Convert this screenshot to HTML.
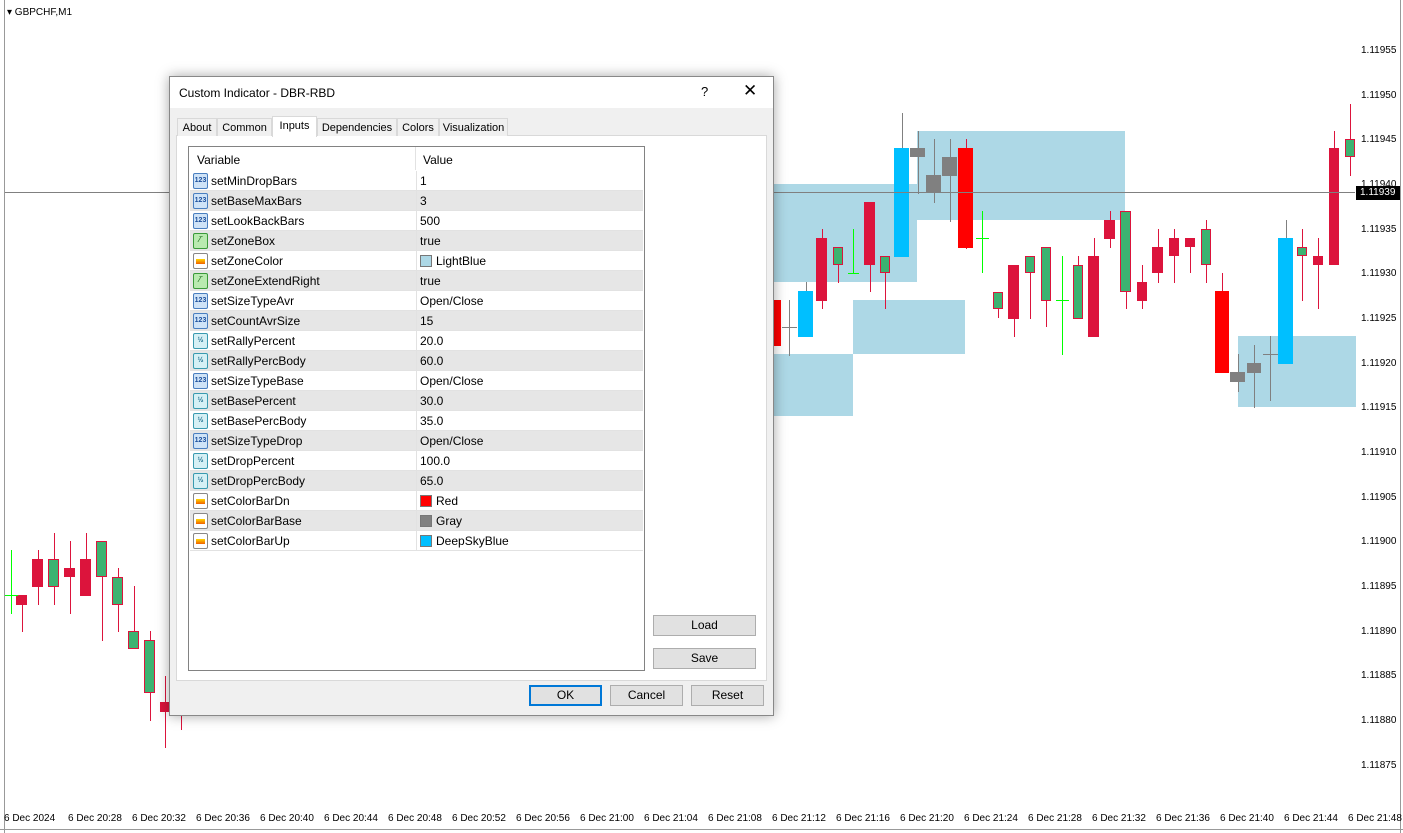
<!DOCTYPE html>
<html><head><meta charset="utf-8"><style>
*{box-sizing:border-box;margin:0;padding:0}
body{width:1403px;height:833px;overflow:hidden;background:#fff;font-family:Tahoma,"Liberation Sans",sans-serif;font-size:11px;color:#000;position:relative}
.a{position:absolute}
.pl{position:absolute;left:1361px;font-size:10px}
.tl{position:absolute;top:813px;font-size:10px;white-space:nowrap}
#dlg{position:absolute;left:169px;top:76px;width:605px;height:640px;background:#f0f0f0;border:1px solid #888;box-shadow:0 0 12px rgba(0,0,0,.35)}
.tab{position:absolute;top:41px;height:18px;border:1px solid #d9d9d9;border-bottom:none;background:#f0f0f0;font-size:11px;padding:3px 0 0 0;text-align:center;white-space:nowrap}
.row{position:absolute;left:1px;width:453px;height:20px;border-bottom:1px solid #e2e2e2;font-size:12px}
.row span.n{position:absolute;left:21px;top:3px}
.row span.v{position:absolute;left:230px;top:3px}
.row .sep{position:absolute;left:226px;top:0;width:1px;height:20px;background:#e2e2e2}
.alt{background:#e6e6e6}
.ic{position:absolute;left:3px;top:2px;width:15px;height:16px;border:1px solid #4a7fc0;border-radius:2px;background:#cfe3f7;font-size:7px;font-weight:bold;color:#1c4f9c;text-align:center;line-height:14px}
.ic.g{border-color:#3a9a3a;background:#b9eab0;color:#1a6a1a}
.ic.o{border-color:#888;background:#fff}
.ic.h{border-color:#3a9ab0;background:#d5f0f5;color:#1a6a8a}
.sw{display:inline-block;width:12px;height:12px;border:1px solid #777;vertical-align:-2px;margin-right:4px}
.btn{position:absolute;height:21px;border:1px solid #adadad;background:#e1e1e1;font-size:12px;text-align:center;line-height:19px}
</style></head><body>
<div class="a" style="left:4px;top:0;width:1px;height:833px;background:#999"></div>
<div class="a" style="left:0;top:829px;width:1403px;height:1px;background:#999"></div>
<div class="a" style="left:1400px;top:0;width:1px;height:833px;background:#999"></div>
<div class="a" style="left:7px;top:7px;font-size:10px">▾ GBPCHF,M1</div>
<div id="chart"></div>
<div class="a" style="left:5px;top:192px;width:1350px;height:1px;background:#808080"></div>
<div class="pl" style="top:45px">1.11955</div><div class="pl" style="top:90px">1.11950</div><div class="pl" style="top:134px">1.11945</div><div class="pl" style="top:179px">1.11940</div>
<div class="a" style="left:1356px;top:186px;width:44px;height:14px;background:#000;color:#fff;font-size:10px;padding:1px 0 0 4px">1.11939</div>
<div class="pl" style="top:224px">1.11935</div><div class="pl" style="top:268px">1.11930</div><div class="pl" style="top:313px">1.11925</div><div class="pl" style="top:358px">1.11920</div><div class="pl" style="top:402px">1.11915</div><div class="pl" style="top:447px">1.11910</div><div class="pl" style="top:492px">1.11905</div><div class="pl" style="top:536px">1.11900</div><div class="pl" style="top:581px">1.11895</div><div class="pl" style="top:626px">1.11890</div><div class="pl" style="top:670px">1.11885</div><div class="pl" style="top:715px">1.11880</div><div class="pl" style="top:760px">1.11875</div>
<div class="tl" style="left:4px">6 Dec 2024</div><div class="tl" style="left:68px">6 Dec 20:28</div><div class="tl" style="left:132px">6 Dec 20:32</div><div class="tl" style="left:196px">6 Dec 20:36</div><div class="tl" style="left:260px">6 Dec 20:40</div><div class="tl" style="left:324px">6 Dec 20:44</div><div class="tl" style="left:388px">6 Dec 20:48</div><div class="tl" style="left:452px">6 Dec 20:52</div><div class="tl" style="left:516px">6 Dec 20:56</div><div class="tl" style="left:580px">6 Dec 21:00</div><div class="tl" style="left:644px">6 Dec 21:04</div><div class="tl" style="left:708px">6 Dec 21:08</div><div class="tl" style="left:772px">6 Dec 21:12</div><div class="tl" style="left:836px">6 Dec 21:16</div><div class="tl" style="left:900px">6 Dec 21:20</div><div class="tl" style="left:964px">6 Dec 21:24</div><div class="tl" style="left:1028px">6 Dec 21:28</div><div class="tl" style="left:1092px">6 Dec 21:32</div><div class="tl" style="left:1156px">6 Dec 21:36</div><div class="tl" style="left:1220px">6 Dec 21:40</div><div class="tl" style="left:1284px">6 Dec 21:44</div><div class="tl" style="left:1348px">6 Dec 21:48</div>

<div id="dlg">
<div class="a" style="left:0;top:0;width:603px;height:31px;background:#fff"></div>
<div class="a" style="left:9px;top:9px;font-size:12px">Custom Indicator - DBR-RBD</div>
<div class="a" style="left:531px;top:7px;font-size:13px">?</div>
<div class="a" style="left:573px;top:4px;font-size:17px">✕</div>
<div class="a" style="left:6px;top:58px;width:591px;height:546px;background:#fff;border:1px solid #d9d9d9"></div>
<div class="tab" style="left:7px;width:40px">About</div>
<div class="tab" style="left:47px;width:55px">Common</div>
<div class="tab" style="left:102px;top:39px;height:21px;width:45px;background:#fff;z-index:2">Inputs</div>
<div class="tab" style="left:147px;width:80px">Dependencies</div>
<div class="tab" style="left:227px;width:42px">Colors</div>
<div class="tab" style="left:269px;width:69px">Visualization</div>
<div class="a" style="left:18px;top:69px;width:457px;height:525px;background:#fff;border:1px solid #828282">
<div class="a" style="left:0;top:0;width:455px;height:23px;font-size:12px"><span class="a" style="left:8px;top:6px">Variable</span><span class="a" style="left:226px;top:0;width:1px;height:23px;background:#e2e2e2"></span><span class="a" style="left:234px;top:6px">Value</span></div>
<div id="rows"></div>
</div>
<div class="btn" style="left:483px;top:538px;width:103px">Load</div>
<div class="btn" style="left:483px;top:571px;width:103px">Save</div>
<div class="btn" style="left:359px;top:608px;width:73px;border:2px solid #0078d7;line-height:17px">OK</div>
<div class="btn" style="left:440px;top:608px;width:73px">Cancel</div>
<div class="btn" style="left:521px;top:608px;width:73px">Reset</div>
</div>
<script>
var rows=[["b","setMinDropBars","1"],["b","setBaseMaxBars","3"],["b","setLookBackBars","500"],["g","setZoneBox","true"],["o","setZoneColor","<i class='sw' style='background:#ADD8E6'></i>LightBlue"],["g","setZoneExtendRight","true"],["b","setSizeTypeAvr","Open/Close"],["b","setCountAvrSize","15"],["h","setRallyPercent","20.0"],["h","setRallyPercBody","60.0"],["b","setSizeTypeBase","Open/Close"],["h","setBasePercent","30.0"],["h","setBasePercBody","35.0"],["b","setSizeTypeDrop","Open/Close"],["h","setDropPercent","100.0"],["h","setDropPercBody","65.0"],["o","setColorBarDn","<i class='sw' style='background:#f00'></i>Red"],["o","setColorBarBase","<i class='sw' style='background:#808080'></i>Gray"],["o","setColorBarUp","<i class='sw' style='background:#00BFFF'></i>DeepSkyBlue"]];
var h="";rows.forEach(function(r,i){var t=r[0]=="b"?"123":r[0]=="g"?"⁄‾":r[0]=="h"?"½":"";var cls=r[0]=="b"?"ic":"ic "+r[0];var inner=r[0]=="o"?"<i style='position:absolute;left:2px;top:5px;width:9px;height:5px;background:linear-gradient(#ffd800,#f06000)'></i>":t;
h+="<div class='row"+(i%2?" alt":"")+"' style='top:"+(24+i*20)+"px'><span class='"+cls+"'>"+inner+"</span><span class='n'>"+r[1]+"</span><i class='sep'></i><span class='v'>"+r[2]+"</span></div>";});
document.getElementById("rows").innerHTML=h;
var c="";function d(x,y,w,hh,bg,ex){c+="<div class='a' style='left:"+x+"px;top:"+y+"px;width:"+w+"px;height:"+hh+"px;background:"+bg+";"+(ex||"")+"'></div>";}
[[773,184,144,98],[917,131,208,89],[853,300,112,54],[773,354,80,62],[1238,336,118,71]].forEach(function(z){d(z[0],z[1],z[2],z[3],"#ADD8E6");});
var C={r:"#DC143C",g:"#3CB371",R:"#FF0000",b:"#00BFFF",y:"#808080"};
var K=[[16,27,595,605,595,632,"r"],[32,43,559,587,550,605,"r"],[48,59,559,587,533,605,"g"],[64,75,568,577,541,614,"r"],[80,91,559,596,533,596,"r"],[96,107,541,577,541,641,"g"],[112,123,577,605,568,632,"g"],[128,139,631,649,586,649,"g"],[144,155,640,693,631,721,"g"],[160,170,702,712,676,748,"r"],
[773,781,300,346,300,346,"R"],[798,813,291,337,282,337,"b"],[816,827,238,301,229,309,"r"],[833,843,247,265,247,283,"g"],[864,875,202,265,202,292,"r"],[880,890,256,273,256,309,"g"],[894,909,148,257,113,257,"b"],[910,925,148,157,131,194,"y"],[926,941,175,193,139,203,"y"],[942,957,157,176,139,222,"y"],[958,973,148,248,139,249,"R"],[993,1003,292,309,292,318,"g"],[1008,1019,265,319,265,337,"r"],[1025,1035,256,273,256,319,"g"],[1041,1051,247,301,247,327,"g"],[1073,1083,265,319,256,319,"g"],[1088,1099,256,337,238,337,"r"],[1104,1115,220,239,211,248,"r"],[1120,1131,211,292,211,309,"g"],[1137,1147,282,301,265,309,"r"],[1152,1163,247,273,229,283,"r"],[1169,1179,238,256,229,283,"r"],[1185,1195,238,247,238,273,"r"],[1201,1211,229,265,220,283,"g"],[1215,1229,291,373,273,373,"R"],[1230,1245,372,382,354,392,"y"],[1247,1261,363,373,345,408,"y"],[1278,1293,238,364,220,364,"b"],[1297,1307,247,256,229,301,"g"],[1313,1323,256,265,238,309,"r"],[1329,1339,148,265,131,265,"r"],[1345,1355,139,157,104,176,"g"]];
K.forEach(function(k){var cx=Math.round((k[0]+k[1])/2);var wc=(k[6]=="y")?"#808080":(k[6]=="b")?"#808080":"#DC143C";if(k[6]=="R")wc="#DC143C";d(cx,k[4],1,k[5]-k[4],wc);d(k[0],k[2],k[1]-k[0],Math.max(2,k[3]-k[2]),C[k[6]],k[6]=="g"?"border:1px solid #DC143C":"");});
[[11,550,614,595,5,"#00FF00"],[789,300,356,327,782,"#808080"],[853,229,273,273,848,"#00FF00"],[982,211,273,238,976,"#00FF00"],[1062,256,355,300,1056,"#00FF00"],[1270,336,401,354,1263,"#808080"]].forEach(function(x){d(x[0],x[1],1,x[2]-x[1],x[5]);d(x[4],x[3],(x[0]-x[4])*2+1,1,x[5]);});
d(181,712,1,18,"#DC143C");
document.getElementById("chart").innerHTML=c;
</script>
</body></html>
